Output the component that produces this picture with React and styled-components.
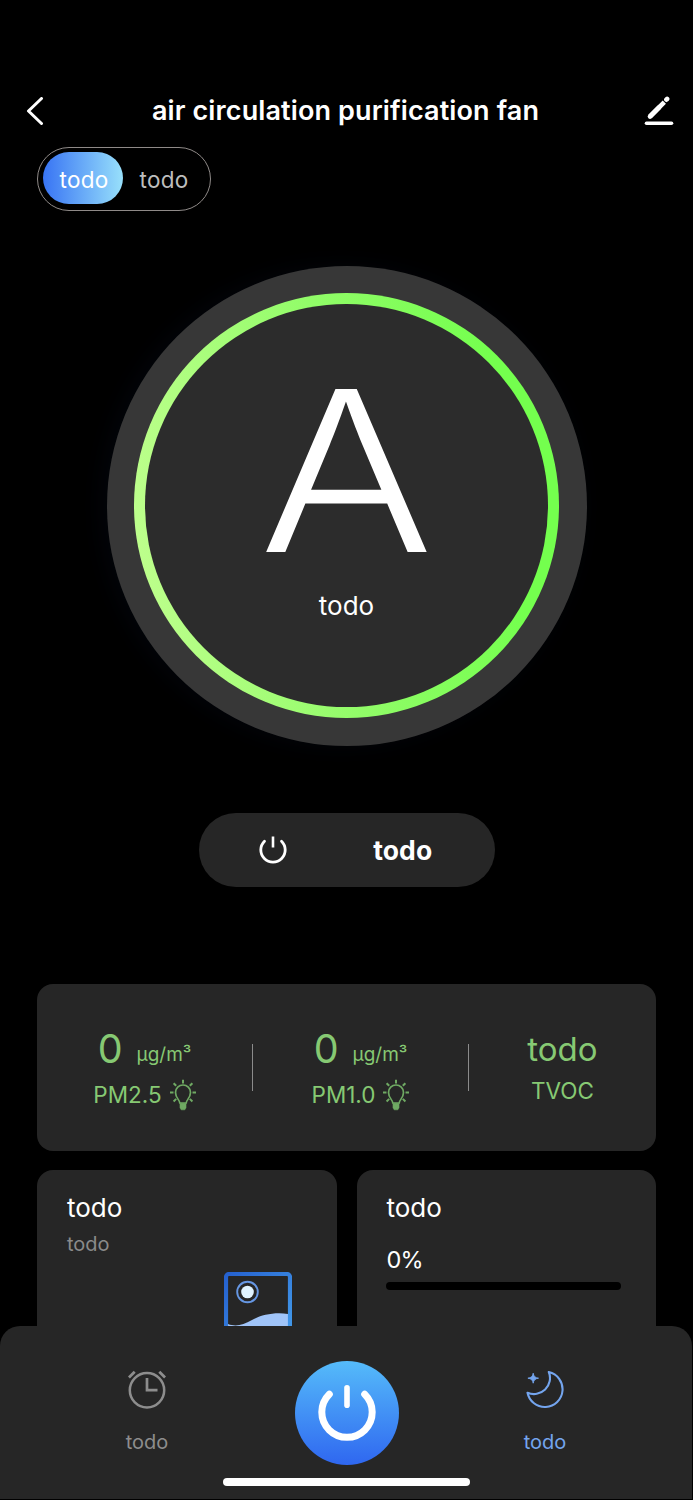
import React from 'react';
import styled, { createGlobalStyle } from 'styled-components';

const GlobalStyle = createGlobalStyle`
  * {
    box-sizing: border-box;
  }

  body {
    margin: 0;
    background: #000;
    font-family: Inter, "Liberation Sans", sans-serif;
    color: #fff;
  }
`

const Screen = styled.div`
  display: flex;
  flex-direction: column;
  width: 693px;
  height: 1500px;
  padding: 80px 1px 1px 0;
  overflow: hidden;
  background: #000;
`

const Header = styled.header`
  display: flex;
  align-items: center;
  justify-content: space-between;
  height: 62px;
  padding: 0 18px 0 26px;
`

const Title = styled.h1`
  margin: 0 0 0 3px;
  font-size: 27px;
  font-weight: 600;
  line-height: 40px;
  letter-spacing: 0.12px;
`

const Main = styled.main`
  flex: 1;
  display: flex;
  flex-direction: column;
  min-height: 0;
  overflow: hidden;
  padding: 5px 36px 0 37px;
`

const Tabs = styled.div`
  display: flex;
  align-self: flex-start;
  flex-shrink: 0;
  width: 174px;
  height: 64px;
  padding: 4px 5px;
  border: 1.5px solid #8f8a88;
  border-radius: 32px;
`

const Tab = styled.button`
  width: 80px;
  height: 52px;
  padding: 3px 0 0 2px;
  border: 0;
  border-radius: 26px;
  background: ${props => props.$active ? 'linear-gradient(90deg, #3874f4, #98e0fb)' : 'none'};
  color: ${props => props.$active ? '#fff' : '#bdbdbd'};
  font: 400 22.5px/28px Inter, sans-serif;
  letter-spacing: 0.3px;
`

const Dial = styled.div`
  flex-shrink: 0;
  align-self: center;
  width: 480px;
  height: 480px;
  margin-top: 54.5px;
  padding: 27.5px;
  border-radius: 50%;
  background: #373737;
  box-shadow: -6px 0 24px rgba(20, 30, 70, 0.16);
`

const Ring = styled.div`
  height: 100%;
  padding: 11px;
  border-radius: 50%;
  background: linear-gradient(83deg, #c2ff90 0%, #91fc68 48%, #74ff4e 85%);
`

const Face = styled.div`
  display: flex;
  flex-direction: column;
  align-items: center;
  height: 100%;
  padding-top: 67px;
  border-radius: 50%;
  background: #2c2c2c;
`

const Mode = styled.div`
  font-size: 224px;
  font-weight: 330;
  line-height: 200px;
  transform: scaleX(1.16);
`

const ModeName = styled.div`
  margin-top: 18.5px;
  font-size: 26px;
  line-height: 32px;
`

const PowerPill = styled.button`
  flex-shrink: 0;
  align-self: center;
  display: grid;
  grid-template-columns: 1fr 1fr;
  align-items: center;
  justify-items: center;
  width: 296px;
  height: 74px;
  margin-top: 67.5px;
  padding: 0 27px 1px 10px;
  border: 0;
  border-radius: 37px;
  background: #262626;
  color: #fff;
  font: 700 26.5px/32px Inter, sans-serif;
  letter-spacing: 0.1px;
`

const Stats = styled.section`
  flex-shrink: 0;
  display: flex;
  height: 167px;
  margin-top: 97px;
  padding-top: 42px;
  border-radius: 16px;
  background: #262626;
  color: #86c973;
`

const Stat = styled.div`
  display: flex;
  flex-direction: column;
  align-items: center;
  gap: ${props => props.$gap || '5px'};
  width: ${props => props.$width};
`

const Divider = styled.div`
  width: 1px;
  height: 47px;
  margin-top: 18px;
  background: #8b8b8b;
`

const Reading = styled.div`
  display: flex;
  align-items: center;
  gap: 14px;
  height: 46px;
  font-size: 39.5px;
  line-height: 48px;
`

const Unit = styled.span`
  padding-top: 11px;
  font-size: 19px;
  line-height: 24px;
`

const Quality = styled.div`
  font-size: 33px;
  line-height: 46px;
`

const StatName = styled.div`
  display: flex;
  align-items: center;
  gap: 8px;
  height: 36px;
  font-size: 22.5px;
  line-height: 30px;
`

const Cards = styled.div`
  display: grid;
  grid-template-columns: 1fr 1fr;
  gap: 20px;
  flex-shrink: 0;
  height: 220px;
  margin-top: 18.5px;
`

const Card = styled.section`
  display: flex;
  flex-direction: column;
  padding: 22.5px 35px 0 30px;
  border-radius: 16px;
  background: #262626;
`

const CardTitle = styled.h2`
  margin: 0;
  font-size: 26px;
  font-weight: 400;
  line-height: 32px;
`

const CardNote = styled.div`
  margin-top: 8px;
  font-size: 20px;
  line-height: 24px;
  color: #8a8a8a;
`

const CardPicture = styled.div`
  display: flex;
  justify-content: flex-end;
  margin: 16px 10px 0 0;
`

const Percent = styled.div`
  margin-top: 20.5px;
  font-size: 23.5px;
  line-height: 30px;
  letter-spacing: -0.8px;
`

const Track = styled.div`
  height: 8px;
  margin: 7.5px 0 0 -1px;
  border-radius: 4px;
  background: #000;
`

const Nav = styled.nav`
  display: flex;
  flex-direction: column;
  align-items: center;
  flex-shrink: 0;
  height: 173px;
  padding-top: 35px;
  border-radius: 20px 20px 0 0;
  background: #262626;
`

const NavItems = styled.div`
  display: grid;
  grid-template-columns: 295px 103px 295px;
  height: 104px;
`

const NavItem = styled.div`
  display: flex;
  flex-direction: column;
  align-items: center;
  gap: 20px;
  padding-top: 8px;
  font-size: 20px;
  line-height: 26px;
  color: ${props => props.$active ? '#74a5ee' : '#8d8d8d'};
`

const PowerButton = styled.button`
  display: flex;
  align-items: center;
  justify-content: center;
  width: 104px;
  height: 104px;
  padding: 0;
  border: 0;
  border-radius: 50%;
  background: linear-gradient(180deg, #55bbfa, #2f67f0);
  color: #fff;
`

const HomeBar = styled.div`
  width: 247px;
  height: 8px;
  margin-top: 13px;
  border-radius: 4px;
  background: #fff;
`

const BackIcon = () => (
  <svg width="18" height="28" viewBox="0 0 18 28" fill="none" stroke="#fff" strokeWidth="3" strokeLinecap="round" strokeLinejoin="round">
    <path d="M15.500 1.500 2.500 14 15.500 26.500" />
  </svg>
)

const EditIcon = () => (
  <svg width="30" height="30" viewBox="0 0 30 30" fill="none" stroke="#fff" strokeLinecap="round">
    <path d="M2.500 27.300h25" strokeWidth="3.600" />
    <path d="M6 20.500 20.300 6.200" strokeWidth="4.600" strokeLinecap="butt" />
    <path d="M6 20.500 15 11.500" strokeWidth="4.600" />
    <path d="m22.400 3.700.7-.7" strokeWidth="4.600" />
  </svg>
)

const BulbIcon = () => (
  <svg width="26" height="32" viewBox="0 0 26 32" fill="none" stroke="#6fa963" strokeWidth="1.700">
    <path d="M9.800 24c0-3-4.300-5-4.300-10.500a7.500 7.500 0 0 1 15 0c0 5.500-4.300 7.500-4.300 10.500z" />
    <path d="M10 24.500h6v4.300l-1.200 2h-3.600L10 28.800z" fill="#6fa963" strokeWidth="0.600" />
    <path d="M13 .8v3.700M0 13.500h3.500M22.500 13.500H26M3.600 4.200l2.600 2.600M22.400 4.200l-2.600 2.600M3.600 22.500l2.600-2.600M22.400 22.500l-2.600-2.600" strokeWidth="2" />
  </svg>
)

const PowerIcon = () => (
  <svg width="30" height="30" viewBox="0 0 30 30" fill="none" stroke="#fff" strokeWidth="2.800" strokeLinecap="round">
    <path d="M15 1.500v11" strokeWidth="2.600" strokeLinecap="butt" />
    <path d="M6.500 6.200a12.200 12.200 0 1 0 17 0" />
  </svg>
)

const BigPowerIcon = () => (
  <svg width="60" height="60" viewBox="0 0 60 60" fill="none" stroke="#fff" strokeWidth="7" strokeLinecap="round">
    <path d="M30 4.700v17.600" strokeWidth="5.600" />
    <path d="M12.300 11.200a25.200 25.200 0 1 0 35.400 0" />
  </svg>
)

const PictureIcon = () => (
  <svg width="68" height="78" viewBox="0 0 68 78" fill="none">
    <defs>
      <linearGradient id="frame" x1="0" y1="0" x2="1" y2="1">
        <stop offset="0" stopColor="#2561cf" />
        <stop offset="1" stopColor="#46a0ec" />
      </linearGradient>
    </defs>
    <path d="M4 52c8 3 15 1 24-4s22-8 36-6v32H4z" fill="#a0c4f8" />
    <rect x="2" y="2" width="64" height="74" rx="3" stroke="url(#frame)" strokeWidth="4.200" />
    <circle cx="23.500" cy="20" r="10.300" stroke="#6697e3" strokeWidth="1.900" />
    <circle cx="23.500" cy="20" r="6.300" fill="#e0f3ff" />
  </svg>
)

const ClockIcon = () => (
  <svg width="38" height="40" viewBox="0 0 38 40" fill="none" stroke="#8d8d8d" strokeWidth="2.500">
    <circle cx="19" cy="21.300" r="17.200" />
    <path d="M19 9v12.200h10.500" strokeWidth="2.700" />
    <path d="M.900 8.500 6.700 2.700M37.100 8.500 31.300 2.700" strokeWidth="2.800" />
  </svg>
)

const MoonIcon = () => (
  <svg width="38" height="40" viewBox="0 0 38 40" fill="none" stroke="#74a5ee" strokeWidth="2.100" strokeLinejoin="round">
    <path d="M22.800 3a17.700 17.700 0 1 1-21.300 20.700A16 16 0 0 0 22.800 3z" />
    <path d="M7.200 4.200Q7.700 8.700 12.500 9.200 7.700 9.700 7.200 14.200 6.700 9.700 1.900 9.200 6.700 8.700 7.200 4.200z" fill="#74a5ee" strokeWidth="0.900" />
  </svg>
)

const particles = ['PM2.5', 'PM1.0'];

export default function App() {
  return (
    <>
      <GlobalStyle />
      <Screen>
        <Header>
          <BackIcon />
          <Title>air circulation purification fan</Title>
          <EditIcon />
        </Header>
        <Main>
          <Tabs>
            <Tab $active>todo</Tab>
            <Tab>todo</Tab>
          </Tabs>
          <Dial>
            <Ring>
              <Face>
                <Mode>A</Mode>
                <ModeName>todo</ModeName>
              </Face>
            </Ring>
          </Dial>
          <PowerPill>
            <PowerIcon />
            <span>todo</span>
          </PowerPill>
          <Stats>
            {particles.map(name => (
              <React.Fragment key={name}>
                <Stat $width="215px">
                  <Reading>0 <Unit>µg/m³</Unit></Reading>
                  <StatName>{name} <BulbIcon /></StatName>
                </Stat>
                <Divider />
              </React.Fragment>
            ))}
            <Stat $width="187px" $gap="1px">
              <Quality>todo</Quality>
              <StatName>TVOC</StatName>
            </Stat>
          </Stats>
          <Cards>
            <Card>
              <CardTitle>todo</CardTitle>
              <CardNote>todo</CardNote>
              <CardPicture><PictureIcon /></CardPicture>
            </Card>
            <Card>
              <CardTitle>todo</CardTitle>
              <Percent>0%</Percent>
              <Track />
            </Card>
          </Cards>
        </Main>
        <Nav>
          <NavItems>
            <NavItem>
              <ClockIcon />
              <span>todo</span>
            </NavItem>
            <PowerButton><BigPowerIcon /></PowerButton>
            <NavItem $active>
              <MoonIcon />
              <span>todo</span>
            </NavItem>
          </NavItems>
          <HomeBar />
        </Nav>
      </Screen>
    </>
  )
}
